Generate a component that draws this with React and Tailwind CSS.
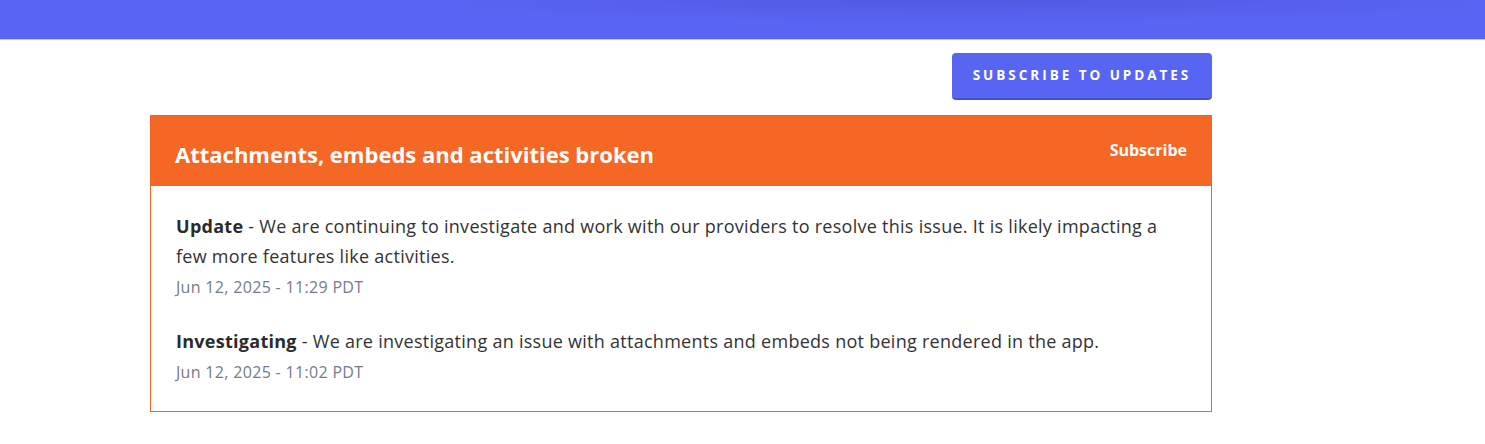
import React from 'react';

const updates = [
  {
    label: 'Update',
    body: 'We are continuing to investigate and work with our providers to resolve this issue. It is likely impacting a few more features like activities.',
    date: 'Jun 12, 2025 - 11:29 PDT',
  },
  {
    label: 'Investigating',
    body: 'We are investigating an issue with attachments and embeds not being rendered in the app.',
    date: 'Jun 12, 2025 - 11:02 PDT',
  },
];

export default function App() {
  return (
    <div className="min-h-screen bg-white font-['Open_Sans','Liberation_Sans',sans-serif]">
      {/* Top bar */}
      <div className="h-[40px] bg-[radial-gradient(ellipse_at_65%_0%,#5059e0_0%,#5865f2_40%)] border-b border-[#c9ccf5]" />

      <div className="w-[1062px] ml-[150px]">
        <div className="flex justify-end pt-[13px] pb-[15px]">
          <button className="h-[47px] w-[260px] rounded-[4px] bg-[#5865f2] border-b-2 border-[#4651c9] text-white text-[13.5px] font-bold uppercase tracking-[0.22em]">
            Subscribe to updates
          </button>
        </div>

        {/* Incident card */}
        <div className="border border-[#f26522]">
          <div className="flex items-start justify-between bg-[#f46725] h-[70px] px-6">
            <h2 className="pt-[23px] text-white text-[22px] font-bold leading-[30px]">
              Attachments, embeds and activities broken
            </h2>
            <span className="pt-[23px] text-white text-[16px] font-bold leading-[22px]">Subscribe</span>
          </div>
          <div className="pl-[25px] pr-6 pt-[25px] pb-[28px] flex flex-col gap-[28px]">
            {updates.map((u) => (
              <div key={u.label}>
                <p className="text-[18px] leading-[30px] tracking-[0.015em] text-[#333333]">
                  <strong className="font-bold text-[#2b2b2b]">{u.label}</strong> - {u.body}
                </p>
                <p className="text-[16px] leading-[22px] tracking-[0.02em] text-[#767b8a] mt-[5px]">{u.date}</p>
              </div>
            ))}
          </div>
        </div>
      </div>
    </div>
  );
}
